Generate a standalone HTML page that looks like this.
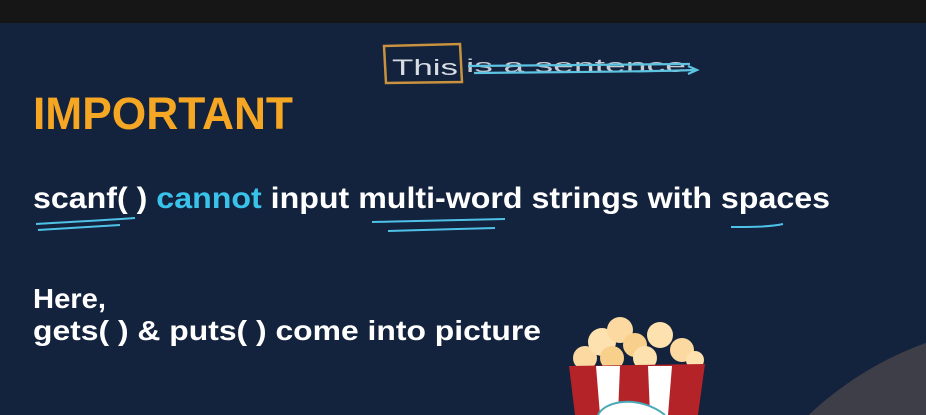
<!DOCTYPE html>
<html><head><meta charset="utf-8"><style>
html,body{margin:0;padding:0;width:926px;height:415px;overflow:hidden;background:#13223d}
svg{display:block}
text{font-family:"Liberation Sans",sans-serif;font-weight:bold}
</style></head><body>
<svg width="926" height="415" viewBox="0 0 926 415">
<rect width="926" height="415" fill="#13223d"/>
<rect width="926" height="23" fill="#161616"/>
<circle cx="1040" cy="660" r="337" fill="#3d3e47"/>
<path d="M384 46 L460 44 L462 82 L386 83 Z" fill="none" stroke="#c8923e" stroke-width="2.5"/>
<text x="392" y="75" style="font-weight:normal" font-size="22" fill="#d8dde4" textLength="66" lengthAdjust="spacingAndGlyphs">This</text>
<text x="466" y="72" style="font-weight:normal" font-size="18" fill="#c6cbd3" textLength="220" lengthAdjust="spacingAndGlyphs">is a sentence</text>
<path d="M468 66 L690 64" stroke="#5cc3e0" stroke-width="2.2" fill="none"/>
<path d="M474 73 C560 72 640 72 696 70 M688 66 L697 70 L688 74" stroke="#5cc3e0" stroke-width="2.2" fill="none"/>
<text x="33" y="129" font-size="45" fill="#f5a623" textLength="260" lengthAdjust="spacingAndGlyphs">IMPORTANT</text>
<text x="33" y="208" font-size="30" fill="#ffffff" textLength="797" lengthAdjust="spacingAndGlyphs"><tspan>scanf( ) </tspan><tspan fill="#39c3ea">cannot</tspan><tspan> input multi-word strings with spaces</tspan></text>
<path d="M36 224 C70 222 110 220 135 218 M38 230 C70 228 100 226 120 225" stroke="#4ec2e6" stroke-width="2" fill="none"/>
<path d="M372 222 C420 221 470 220 505 219 M388 231 C420 230 460 229 495 228" stroke="#4ec2e6" stroke-width="2" fill="none"/>
<path d="M731 227 C750 227 770 227 783 224" stroke="#4ec2e6" stroke-width="2" fill="none"/>
<text x="33" y="308" font-size="28" fill="#ffffff" textLength="73" lengthAdjust="spacingAndGlyphs">Here,</text>
<text x="33" y="340" font-size="28" fill="#ffffff" textLength="508" lengthAdjust="spacingAndGlyphs">gets( ) &amp; puts( ) come into picture</text>
<g>
<circle cx="585" cy="358" r="12" fill="#fbd9a0"/>
<circle cx="602" cy="342" r="14" fill="#fde1ae"/>
<circle cx="620" cy="330" r="13" fill="#fbd9a0"/>
<circle cx="635" cy="345" r="12" fill="#f9cf8c"/>
<circle cx="660" cy="335" r="13" fill="#fde1ae"/>
<circle cx="682" cy="350" r="12" fill="#fbd9a0"/>
<circle cx="695" cy="360" r="9" fill="#fde1ae"/>
<circle cx="645" cy="358" r="12" fill="#fde1ae"/>
<circle cx="612" cy="358" r="12" fill="#f9cf8c"/>
<path d="M569 366 L705 364 L698 415 L575 415 Z" fill="#b32328"/>
<path d="M596 366 L620 366 L618 415 L600 415 Z" fill="#ffffff"/>
<path d="M648 366 L672 366 L668 415 L650 415 Z" fill="#ffffff"/>
<path d="M598 415 C605 400 640 395 665 415" fill="#ffffff" stroke="#4aa9b8" stroke-width="2"/>
</g>
</svg>
</body></html>
